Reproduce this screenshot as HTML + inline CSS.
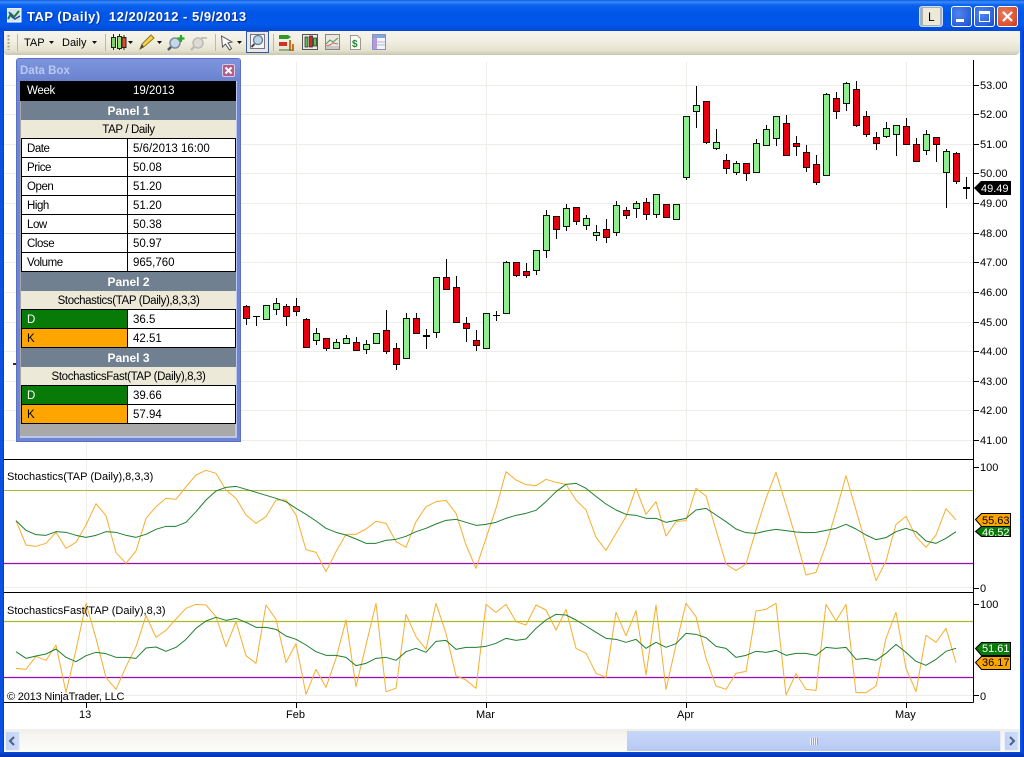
<!DOCTYPE html>
<html>
<head>
<meta charset="utf-8">
<title>TAP (Daily)</title>
<style>
html,body{margin:0;padding:0;background:#fff}
body{position:relative;width:1024px;height:757px;overflow:hidden;font-family:"Liberation Sans",sans-serif;font-size:11.5px;color:#000}
div{position:absolute;box-sizing:border-box}
.t{white-space:pre;line-height:14px}
.row{left:21px;width:215px;height:19px;border-bottom:1px solid #000;border-left:1px solid #000;border-right:1px solid #000;background:#fff;line-height:20px;white-space:pre}
.row .a{left:0;top:0;width:106px;height:18px;padding-left:5px;border-right:1px solid #000;letter-spacing:-.45px}
.row .b{left:111px;top:0}
.h{left:21px;width:215px;height:19px;background:#708090;color:#fff;font-weight:bold;text-align:center;line-height:21px;font-size:12px}
.s{left:21px;width:215px;background:#ece9d8;text-align:center;line-height:20px;border-bottom:1px solid #000;height:19px;letter-spacing:-.37px}
</style>
</head>
<body>
<!-- title bar -->
<div style="left:0;top:0;width:1024px;height:31px;background:linear-gradient(#0a5ae6 0,#3b8cf8 2px,#0a62ee 5px,#0055e6 14px,#0058ea 24px,#0049d6 31px)"></div>
<div style="left:0;top:31px;width:4px;height:726px;background:linear-gradient(90deg,#0a4be0,#0a55ea 50%,#0638c0)"></div>
<div style="left:1020px;top:31px;width:4px;height:726px;background:linear-gradient(90deg,#0a55ea,#0a4be0 50%,#0638c0)"></div>
<div style="left:0;top:752px;width:1024px;height:5px;background:linear-gradient(#0a4ad8,#0632ac)"></div>
<div class="t" style="left:27px;top:10px;color:#fff;font-weight:bold;font-size:13px;letter-spacing:.5px;text-shadow:1px 1px 1px #0a2f9a">TAP (Daily)  12/20/2012 - 5/9/2013</div>
<svg style="position:absolute;left:7px;top:8px" width="15" height="15" viewBox="0 0 15 15"><rect x="0" y="0" width="14" height="14" fill="#d5e2f0" stroke="#fff"/><path d="M1 11L4 6L7 9L12 3" stroke="#1d7a3a" stroke-width="2" fill="none"/><path d="M2 4L5 9L8 11L13 8" stroke="#224a9a" stroke-width="1.4" fill="none"/></svg>
<!-- window buttons -->
<div style="left:919px;top:6px;width:24px;height:21px;border-radius:3px;border:1px solid #cfe0ff;background:#a6b0b8"></div>
<div style="left:923px;top:8px;width:17px;height:17px;background:#ece9d8"></div>
<div class="t" style="left:928px;top:10px;font-size:12px">L</div>
<div style="left:951px;top:6px;width:21px;height:21px;border-radius:3px;border:1px solid #fff;background:radial-gradient(circle at 35% 35%,#4f86ef,#2c5fdb 70%,#1c46c0)"></div>
<div style="left:956px;top:19px;width:8px;height:3px;background:#fff"></div>
<div style="left:974px;top:6px;width:21px;height:21px;border-radius:3px;border:1px solid #fff;background:radial-gradient(circle at 35% 35%,#4f86ef,#2c5fdb 70%,#1c46c0)"></div>
<div style="left:979px;top:11px;width:11px;height:11px;border:1px solid #fff;border-top:3px solid #fff"></div>
<div style="left:997px;top:6px;width:21px;height:21px;border-radius:3px;border:1px solid #fff;background:radial-gradient(circle at 35% 35%,#e88060,#d9502f 70%,#c23a1c)"></div>
<svg style="position:absolute;left:997px;top:6px" width="21" height="21"><path d="M6 6L15 15M15 6L6 15" stroke="#fff" stroke-width="2.2"/></svg>
<!-- toolbar -->
<div style="left:4px;top:31px;width:1016px;height:24px;background:linear-gradient(#f6f4ea,#f2f0e3 40%,#e6e3d0 80%,#c9c6b0);border-radius:3px 0 5px 3px"></div>
<svg style="position:absolute;left:0;top:30px" width="400" height="26" viewBox="0 30 400 26">
<path d="M8.500 35v15" stroke="#a8a48c" stroke-dasharray="2 1.500" stroke-width="2"/>
<path d="M17.500 34v17M105.500 34v17M215.500 34v17M273.500 34v17" stroke="#bdb9a3"/>
<path d="M49 41h5l-2.500 3zM92 41h5l-2.500 3zM128 41h5l-2.500 3zM157 41h5l-2.500 3zM237 41h5l-2.500 3z" fill="#111"/>
<!-- candles icon -->
<path d="M113.500 34v16M119.500 34v16M124 35v15" stroke="#222"/>
<rect x="111.500" y="37.500" width="4" height="10" fill="#7fd36a" stroke="#222"/><rect x="117.500" y="36.500" width="4" height="12" fill="#8fe06f" stroke="#222"/><rect x="122" y="37.500" width="4" height="10" fill="#e2492c" stroke="#222"/>
<!-- pencil -->
<path d="M140 49l2-5 9-9 3 3-9 8z" fill="#f6d24a" stroke="#8d7a1e"/><path d="M140 49l2-5 2 3z" fill="#444"/>
<!-- magnifier plus -->
<circle cx="175" cy="43" r="5" fill="#c5d8e8" stroke="#7b8ea0" stroke-width="1.500"/><path d="M171 47l-3 3" stroke="#556" stroke-width="2.500"/><path d="M181 35v7M177.500 38.500h7" stroke="#2aa52a" stroke-width="2.200"/>
<!-- grey magnifier -->
<circle cx="198" cy="43" r="5" fill="#dcdcd4" stroke="#bcbcb4" stroke-width="1.500"/><path d="M194 47l-3 3" stroke="#bbb" stroke-width="2.500"/><path d="M201 38h6" stroke="#c4c4bc" stroke-width="2"/>
<!-- cursor -->
<path d="M221.500 36l1 11 3-3 4 6 2-1.500-3.500-5.500 4-1z" fill="#fff" stroke="#555"/>
<!-- selected zoom -->
<rect x="246.500" y="31.500" width="22" height="21" fill="#e6e8ee" stroke="#3a5a94"/><rect x="250.500" y="34.500" width="14" height="14" fill="#f4f4f4" stroke="#777"/>
<circle cx="258" cy="40" r="4.500" fill="#bcd4ea" stroke="#66788a" stroke-width="1.300"/><path d="M254.500 44l-3 3" stroke="#445" stroke-width="2"/>
<!-- bars icon -->
<path d="M279 35h9l3 2-3 2h-9z" fill="#2a9a2a"/><path d="M279 42h8v4h-8z" fill="#d33020"/><path d="M290 40v11M293 44v7" stroke="#d0701a" stroke-width="2"/><path d="M279 50h14" stroke="#3a7a3a"/>
<!-- candlestick box -->
<rect x="302.500" y="34.500" width="15" height="15" fill="#eaeaea" stroke="#555"/><rect x="305" y="37" width="3" height="10" fill="#5fbf4a" stroke="#222" stroke-width=".7"/><rect x="309.500" y="36" width="3" height="11" fill="#d42a1a" stroke="#222" stroke-width=".7"/><rect x="313.500" y="38" width="3" height="8" fill="#5fbf4a" stroke="#222" stroke-width=".7"/>
<!-- line chart -->
<rect x="325.500" y="34.500" width="14" height="15" fill="#e9e7e0" stroke="#888"/><path d="M326 44l4-4 3 2 5-4" stroke="#4a9a4a" fill="none"/><path d="M326 46l4-1 3-2 5 1" stroke="#c66" fill="none"/><rect x="326" y="46" width="13" height="3" fill="#c9c9c9"/>
<!-- dollar -->
<path d="M350.500 35.500h7l3 3v11h-10z" fill="#fbfbf4" stroke="#999"/>
<text x="352" y="47" font-family="Liberation Sans" font-size="10" font-weight="bold" fill="#1d8a2e">$</text>
<!-- table -->
<rect x="372.500" y="34.500" width="13" height="15" fill="#f4f4fb" stroke="#8c8cc8"/><rect x="373" y="35" width="12" height="3" fill="#7fa8d8"/><rect x="373" y="38" width="4" height="11" fill="#b79bd8"/><path d="M377 42h8M377 45h8" stroke="#b8b8d8"/>
</svg>
<div class="t" style="left:24px;top:36px;font-size:11px">TAP</div>
<div class="t" style="left:62px;top:36px;font-size:11px">Daily</div>

<!-- chart -->
<svg style="position:absolute;left:0;top:0" width="1024" height="757" viewBox="0 0 1024 757">
<g stroke="#efede8" fill="none">
<path d="M4 85.500H973M4 114.500H973M4 144.500H973M4 173.500H973M4 203.500H973M4 233.500H973M4 262.500H973M4 292.500H973M4 322.500H973M4 351.500H973M4 381.500H973M4 410.500H973M4 440.500H973M4 587.500H973M4 695.500H973"/>
<path d="M86.500 62V458M296.500 62V458M486.500 62V458M686.500 62V458M906.500 62V458M86.500 460V591M296.500 460V591M486.500 460V591M686.500 460V591M906.500 460V591M86.500 593V701M296.500 593V701M486.500 593V701M686.500 593V701M906.500 593V701"/>
</g>
<!-- wicks -->
<path stroke="#000" fill="none" d="M246.500 305V325M256.500 316V326M266.500 305V320M276.500 298V315M286.500 304V326M296.500 298V316M306.500 318V348M316.500 328V345M326.500 338V351M336.500 339V349M346.500 335V344M356.500 337V351M366.500 340V354M376.500 333V343M386.500 310V354M396.500 343V370M406.500 313V358M416.500 313V333M426.500 329V349M436.500 277V338M446.500 259V289M456.500 276V323M466.500 317V342M476.500 330V351M486.500 313V348M496.500 311V321M506.500 261V313M516.500 262V277M526.500 263V278M536.500 250V275M546.500 210V258M556.500 216V239M566.500 204V231M576.500 207V225M586.500 215V230M596.500 225V241M606.500 219V243M616.500 201V236M626.500 207V219M636.500 201V218M646.500 198V220M656.500 194V218M666.500 204V218M676.500 204V220M686.500 116V180M696.500 86V128M706.500 101V144M716.500 129V150M726.500 154V174M736.500 161V175M746.500 163V181M756.500 139V172M766.500 125V145M776.500 116V146M786.500 115V155M796.500 136V156M806.500 145V172M816.500 155V185M826.500 93V175M836.500 92V119M846.500 82V111M856.500 81V127M866.500 111V137M876.500 132V150M886.500 122V138M896.500 125V156M906.500 118V145M916.500 138V162M926.500 130V155M936.500 137V162M946.500 149V208M956.500 152V184M966.500 177V199"/>
<path stroke="#000" fill="none" d="M253 316.500h7M493 315.500h7"/>
<path stroke="#000" stroke-width="2" fill="none" d="M423 336h7M963 188h7"/>
<path d="M13 364h4" stroke="#5a1a20" stroke-width="2"/>
<!-- red bodies -->
<path fill="#e6000f" stroke="#111" d="M243.500 306.500h6v12h-6zM283.500 306.500h6v10h-6zM293.500 306.500h6v5h-6zM303.500 319.500h6v28h-6zM323.500 338.500h6v10h-6zM353.500 342.500h6v8h-6zM383.500 330.500h6v21h-6zM393.500 348.500h6v16h-6zM413.500 318.500h6v15h-6zM443.500 277.500h6v12h-6zM453.500 287.500h6v35h-6zM463.500 323.500h6v5h-6zM473.500 340.500h6v5h-6zM513.500 262.500h6v13h-6zM523.500 271.500h6v4h-6zM553.500 216.500h6v13h-6zM573.500 207.500h6v14h-6zM603.500 229.500h6v8h-6zM623.500 210.500h6v5h-6zM643.500 202.500h6v12h-6zM663.500 204.500h6v13h-6zM703.500 101.500h6v41h-6zM723.500 160.500h6v8h-6zM743.500 163.500h6v10h-6zM783.500 123.500h6v32h-6zM793.500 143.500h6v3h-6zM803.500 152.500h6v15h-6zM813.500 164.500h6v18h-6zM833.500 98.500h6v13h-6zM853.500 89.500h6v36h-6zM863.500 116.500h6v18h-6zM873.500 137.500h6v6h-6zM903.500 126.500h6v18h-6zM913.500 144.500h6v17h-6zM933.500 137.500h6v7h-6zM953.500 153.500h6v28h-6z"/>
<!-- green bodies -->
<path fill="#90ee90" stroke="#111" d="M263.500 305.500h6v14h-6zM273.500 303.500h6v6h-6zM313.500 333.500h6v7h-6zM333.500 342.500h6v6h-6zM343.500 338.500h6v5h-6zM363.500 344.500h6v5h-6zM373.500 333.500h6v10h-6zM403.500 318.500h6v40h-6zM433.500 277.500h6v55h-6zM483.500 313.500h6v35h-6zM503.500 262.500h6v51h-6zM533.500 250.500h6v20h-6zM543.500 215.500h6v35h-6zM563.500 208.500h6v18h-6zM583.500 218.500h6v7h-6zM593.500 232.500h6v3h-6zM613.500 205.500h6v27h-6zM633.500 203.500h6v5h-6zM653.500 194.500h6v20h-6zM673.500 204.500h6v15h-6zM683.500 116.500h6v61h-6zM693.500 105.500h6v6h-6zM713.500 142.500h6v6h-6zM733.500 163.500h6v9h-6zM753.500 143.500h6v29h-6zM763.500 129.500h6v16h-6zM773.500 116.500h6v22h-6zM823.500 94.500h6v81h-6zM843.500 83.500h6v20h-6zM883.500 128.500h6v8h-6zM893.500 125.500h6v9h-6zM923.500 134.500h6v16h-6zM943.500 151.500h6v21h-6z"/>
<!-- panel 2 lines -->
<path d="M4 490.500H973" stroke="#a9b836"/>
<path d="M4 562.500H973M4 564.500H973" stroke="#f1def6"/>
<path d="M4 563.500H973" stroke="#9010b0"/>
<g transform="translate(0,455) scale(1,.33333)" fill="none" stroke-linejoin="round">
<polyline vector-effect="non-scaling-stroke" stroke="#f7ae2e" points="16,197 26,270 36,274 46,265 56,232 66,280 76,262 86,210 96,146 106,182 116,293 126,325 136,288 146,190 156,155 166,130 176,133 186,95 196,60 206,46 216,55 226,105 236,130 246,180 256,205 266,185 276,135 286,135 296,180 306,284 316,292 326,350 336,290 346,238 356,238 366,222 376,199 386,205 396,260 406,277 416,200 426,155 436,140 446,136 456,175 466,270 476,340 486,250 496,160 506,50 516,75 526,89 536,92 546,73 556,82 566,88 576,135 586,165 596,247 606,286 616,235 626,185 636,100 646,178 656,140 666,243 676,200 686,197 696,100 706,123 716,225 726,327 736,347 746,327 756,225 766,130 776,52 786,150 796,250 806,360 816,352 826,270 836,170 846,62 856,165 866,270 876,377 886,318 896,208 906,184 916,245 926,277 936,240 946,161 956,195"/>
<polyline vector-effect="non-scaling-stroke" stroke="#1f7f2f" points="16,197 26,226 36,239 46,241 56,230 66,232 76,241 86,247 96,241 106,230 116,232 126,241 136,247 146,238 156,223 166,214 176,214 186,202 196,170 206,135 216,108 226,97 236,94 246,103 256,112 266,121 276,130 286,140 296,160 306,178 316,198 326,220 336,232 346,240 356,252 366,265 376,265 386,256 396,253 406,244 416,230 426,220 436,207 446,196 456,193 466,202 476,211 486,208 496,202 506,190 516,181 526,175 536,166 546,140 556,110 566,88 576,85 586,100 596,124 606,147 616,165 626,178 636,181 646,190 656,190 666,202 676,196 686,190 696,165 706,160 716,180 726,200 736,222 746,233 756,235 766,228 776,223 786,227 796,231 806,233 816,232 826,226 836,220 846,208 856,222 866,240 876,254 886,248 896,230 906,220 916,230 926,258 936,265 946,250 956,230"/>
</g>
<!-- panel 3 lines -->
<path d="M4 620.500H973M4 622.500H973" stroke="#f5f7dc"/>
<path d="M4 621.500H973" stroke="#a9b836"/>
<path d="M4 676.500H973M4 678.500H973" stroke="#f1def6"/>
<path d="M4 677.500H973" stroke="#9010b0"/>
<g transform="translate(0,595) scale(1,.33333)" fill="none" stroke-linejoin="round">
<polyline vector-effect="non-scaling-stroke" stroke="#f7ae2e" points="16,220 26,223 36,184 46,196 56,150 66,292 76,165 86,25 96,130 106,248 116,283 126,215 136,155 146,62 156,127 166,106 176,72 186,40 196,28 206,30 216,65 226,155 236,80 246,182 256,205 266,30 276,73 286,202 296,146 306,298 316,223 326,277 336,190 346,75 356,275 366,150 376,25 386,290 396,280 406,58 416,125 426,163 436,25 446,115 456,242 466,255 476,280 486,28 496,52 506,28 516,80 526,90 536,30 546,45 556,105 566,43 576,160 586,175 596,235 606,247 616,52 626,122 636,47 646,240 656,30 666,283 676,150 686,25 696,65 706,190 716,273 726,283 736,235 746,229 756,48 766,43 776,25 786,300 796,236 806,283 816,286 826,28 836,78 846,28 856,293 866,293 876,273 886,130 896,52 906,220 916,290 926,121 936,142 946,100 956,203"/>
<polyline vector-effect="non-scaling-stroke" stroke="#1f7f2f" points="16,170 26,190 36,183 46,177 56,162 66,187 76,200 86,182 96,172 106,176 116,187 126,187 136,190 146,159 156,156 166,169 176,157 186,133 196,100 206,78 216,67 226,76 236,70 246,82 256,97 266,97 276,103 286,123 296,133 306,150 316,170 326,181 336,181 346,187 356,212 366,205 376,190 386,187 396,196 406,170 416,160 426,172 436,139 446,136 456,163 466,157 476,157 486,154 496,145 506,130 516,136 526,132 536,100 546,75 556,58 566,60 576,75 586,93 596,112 606,130 616,133 626,142 636,133 646,160 656,142 666,157 676,146 686,115 696,118 706,128 716,154 726,160 736,187 746,181 756,169 766,172 776,166 786,181 796,175 806,175 816,181 826,157 836,160 846,157 856,193 866,190 876,196 886,175 896,148 906,172 916,199 926,211 936,193 946,169 956,160"/>
</g>
<!-- axes -->
<path stroke="#000" fill="none" d="M4 459.500H973.500M4 592.500H973.500M4 702.500H973.500M973.500 60V702.500M973 85.500h6M973 114.500h6M973 144.500h6M973 173.500h6M973 203.500h6M973 233.500h6M973 262.500h6M973 292.500h6M973 322.500h6M973 351.500h6M973 381.500h6M973 410.500h6M973 440.500h6M973 467.500h6M973 588.500h6M973 604.500h6M973 695.500h6M86.500 702v6M296.500 702v6M486.500 702v6M686.500 702v6M906.500 702v6"/>
<!-- value tags -->
<path d="M974 188l7-7h30v14h-30z" fill="#000"/>
<path d="M975.500 519.500l6-6h29v13h-29z" fill="#ffa500" stroke="#000"/>
<path d="M975.500 531.500l6-5h29v10h-29z" fill="#087a08" stroke="#000"/>
<path d="M975.500 648.500l6-6h29v13h-29z" fill="#087a08" stroke="#000"/>
<path d="M975.500 662.500l6-6h29v13h-29z" fill="#ffa500" stroke="#000"/>
</svg>
<!-- axis labels -->
<div class="t" style="left:980px;top:79px;font-size:11px">53.00</div>
<div class="t" style="left:980px;top:108px;font-size:11px">52.00</div>
<div class="t" style="left:980px;top:138px;font-size:11px">51.00</div>
<div class="t" style="left:980px;top:167px;font-size:11px">50.00</div>
<div class="t" style="left:980px;top:197px;font-size:11px">49.00</div>
<div class="t" style="left:980px;top:227px;font-size:11px">48.00</div>
<div class="t" style="left:980px;top:256px;font-size:11px">47.00</div>
<div class="t" style="left:980px;top:286px;font-size:11px">46.00</div>
<div class="t" style="left:980px;top:316px;font-size:11px">45.00</div>
<div class="t" style="left:980px;top:345px;font-size:11px">44.00</div>
<div class="t" style="left:980px;top:375px;font-size:11px">43.00</div>
<div class="t" style="left:980px;top:404px;font-size:11px">42.00</div>
<div class="t" style="left:980px;top:434px;font-size:11px">41.00</div>
<div class="t" style="left:981px;top:182px;font-size:11px;color:#fff">49.49</div>
<div class="t" style="left:980px;top:461px;font-size:11px">100</div>
<div class="t" style="left:980px;top:582px;font-size:11px">0</div>
<div class="t" style="left:980px;top:598px;font-size:11px">100</div>
<div class="t" style="left:980px;top:690px;font-size:11px">0</div>
<div class="t" style="left:982px;top:514px;font-size:11px">55.63</div>
<div class="t" style="left:982px;top:526px;font-size:11px;color:#fff">46.52</div>
<div class="t" style="left:982px;top:642px;font-size:11px;color:#fff">51.61</div>
<div class="t" style="left:982px;top:656px;font-size:11px">36.17</div>
<div class="t" style="left:7px;top:470px;font-size:11px">Stochastics(TAP (Daily),8,3,3)</div>
<div class="t" style="left:7px;top:604px;font-size:11px">StochasticsFast(TAP (Daily),8,3)</div>
<div class="t" style="left:7px;top:690px;font-size:11px;letter-spacing:-.18px">© 2013 NinjaTrader, LLC</div>
<div class="t" style="left:79px;top:708px;font-size:11px">13</div>
<div class="t" style="left:286px;top:708px;font-size:11px">Feb</div>
<div class="t" style="left:476px;top:708px;font-size:11px">Mar</div>
<div class="t" style="left:677px;top:708px;font-size:11px">Apr</div>
<div class="t" style="left:895px;top:708px;font-size:11px">May</div>
<!-- scrollbar -->
<div style="left:4px;top:729px;width:1016px;height:23px;background:linear-gradient(#efeee8,#f6f5f1 30%,#fcfcfa)"></div>
<div style="left:5px;top:731px;width:15px;height:20px;border-radius:2px;border:1px solid #e8eefc;background:linear-gradient(90deg,#c0d2f6,#cfdcf8)"></div>
<div style="left:627px;top:731px;width:374px;height:20px;background:linear-gradient(#c7d7f9,#bfd0f6 60%,#b5c8f2);border-right:1px solid #e6ecfb"></div>
<div style="left:1004px;top:731px;width:15px;height:20px;border-radius:2px;border:1px solid #e8eefc;background:linear-gradient(90deg,#c0d2f6,#cfdcf8)"></div>
<svg style="position:absolute;left:0;top:725px" width="1024" height="30" viewBox="0 725 1024 30">
<path d="M14 737l-4 4 4 4M1010 737l4 4-4 4" stroke="#4d6185" stroke-width="2" fill="none"/>
<path d="M810.500 738v7M812.500 738v7M814.500 738v7M816.500 738v7" stroke="#eef3fd"/>
<path d="M811.500 738v7M813.500 738v7M815.500 738v7M817.500 738v7" stroke="#90a6d8"/>
</svg>
<!-- Data Box -->
<div style="left:16px;top:58px;width:225px;height:384px;background:#6f85d0;border:1px solid #5a70c8;border-radius:3px 3px 0 0"></div>
<div style="left:17px;top:59px;width:223px;height:22px;background:linear-gradient(#7e95de,#6b82cf)"></div>
<div style="left:20px;top:81px;width:217px;height:357px;background:#a9a9a9;border-right:2px solid #b9c8ec;border-bottom:2px solid #b9c8ec"></div>
<div class="t" style="left:20px;top:64px;color:#b9c9f0;font-weight:bold;font-size:11.500px">Data Box</div>
<div style="left:222px;top:64px;width:13px;height:13px;background:#b05f8f;border:1px solid #d8c8e0;border-radius:2px"></div>
<svg style="position:absolute;left:222px;top:64px" width="13" height="13"><path d="M3.500 3.500L9.500 9.500M9.500 3.500L3.500 9.500" stroke="#fff" stroke-width="2"/></svg>

<div style="left:20px;top:81px;width:216px;height:20px;background:#000;color:#fff;line-height:20px;white-space:pre"><div style="left:7px;top:0;letter-spacing:-.3px">Week</div><div style="left:113px;top:0">19/2013</div></div>
<div class="h" style="top:101px">Panel 1</div>
<div class="s" style="top:120px">TAP / Daily</div>
<div class="row" style="top:139px"><div class="a">Date</div><div class="b">5/6/2013 16:00</div></div>
<div class="row" style="top:158px"><div class="a">Price</div><div class="b">50.08</div></div>
<div class="row" style="top:177px"><div class="a">Open</div><div class="b">51.20</div></div>
<div class="row" style="top:196px"><div class="a">High</div><div class="b">51.20</div></div>
<div class="row" style="top:215px"><div class="a">Low</div><div class="b">50.38</div></div>
<div class="row" style="top:234px"><div class="a">Close</div><div class="b">50.97</div></div>
<div class="row" style="top:253px"><div class="a">Volume</div><div class="b">965,760</div></div>
<div class="h" style="top:272px">Panel 2</div>
<div class="s" style="top:291px">Stochastics(TAP (Daily),8,3,3)</div>
<div class="row" style="top:310px"><div class="a" style="background:#087a08;color:#fff">D</div><div class="b">36.5</div></div>
<div class="row" style="top:329px"><div class="a" style="background:#ffa500">K</div><div class="b">42.51</div></div>
<div class="h" style="top:348px">Panel 3</div>
<div class="s" style="top:367px">StochasticsFast(TAP (Daily),8,3)</div>
<div class="row" style="top:386px"><div class="a" style="background:#087a08;color:#fff">D</div><div class="b">39.66</div></div>
<div class="row" style="top:405px"><div class="a" style="background:#ffa500">K</div><div class="b">57.94</div></div>
</body>
</html>
